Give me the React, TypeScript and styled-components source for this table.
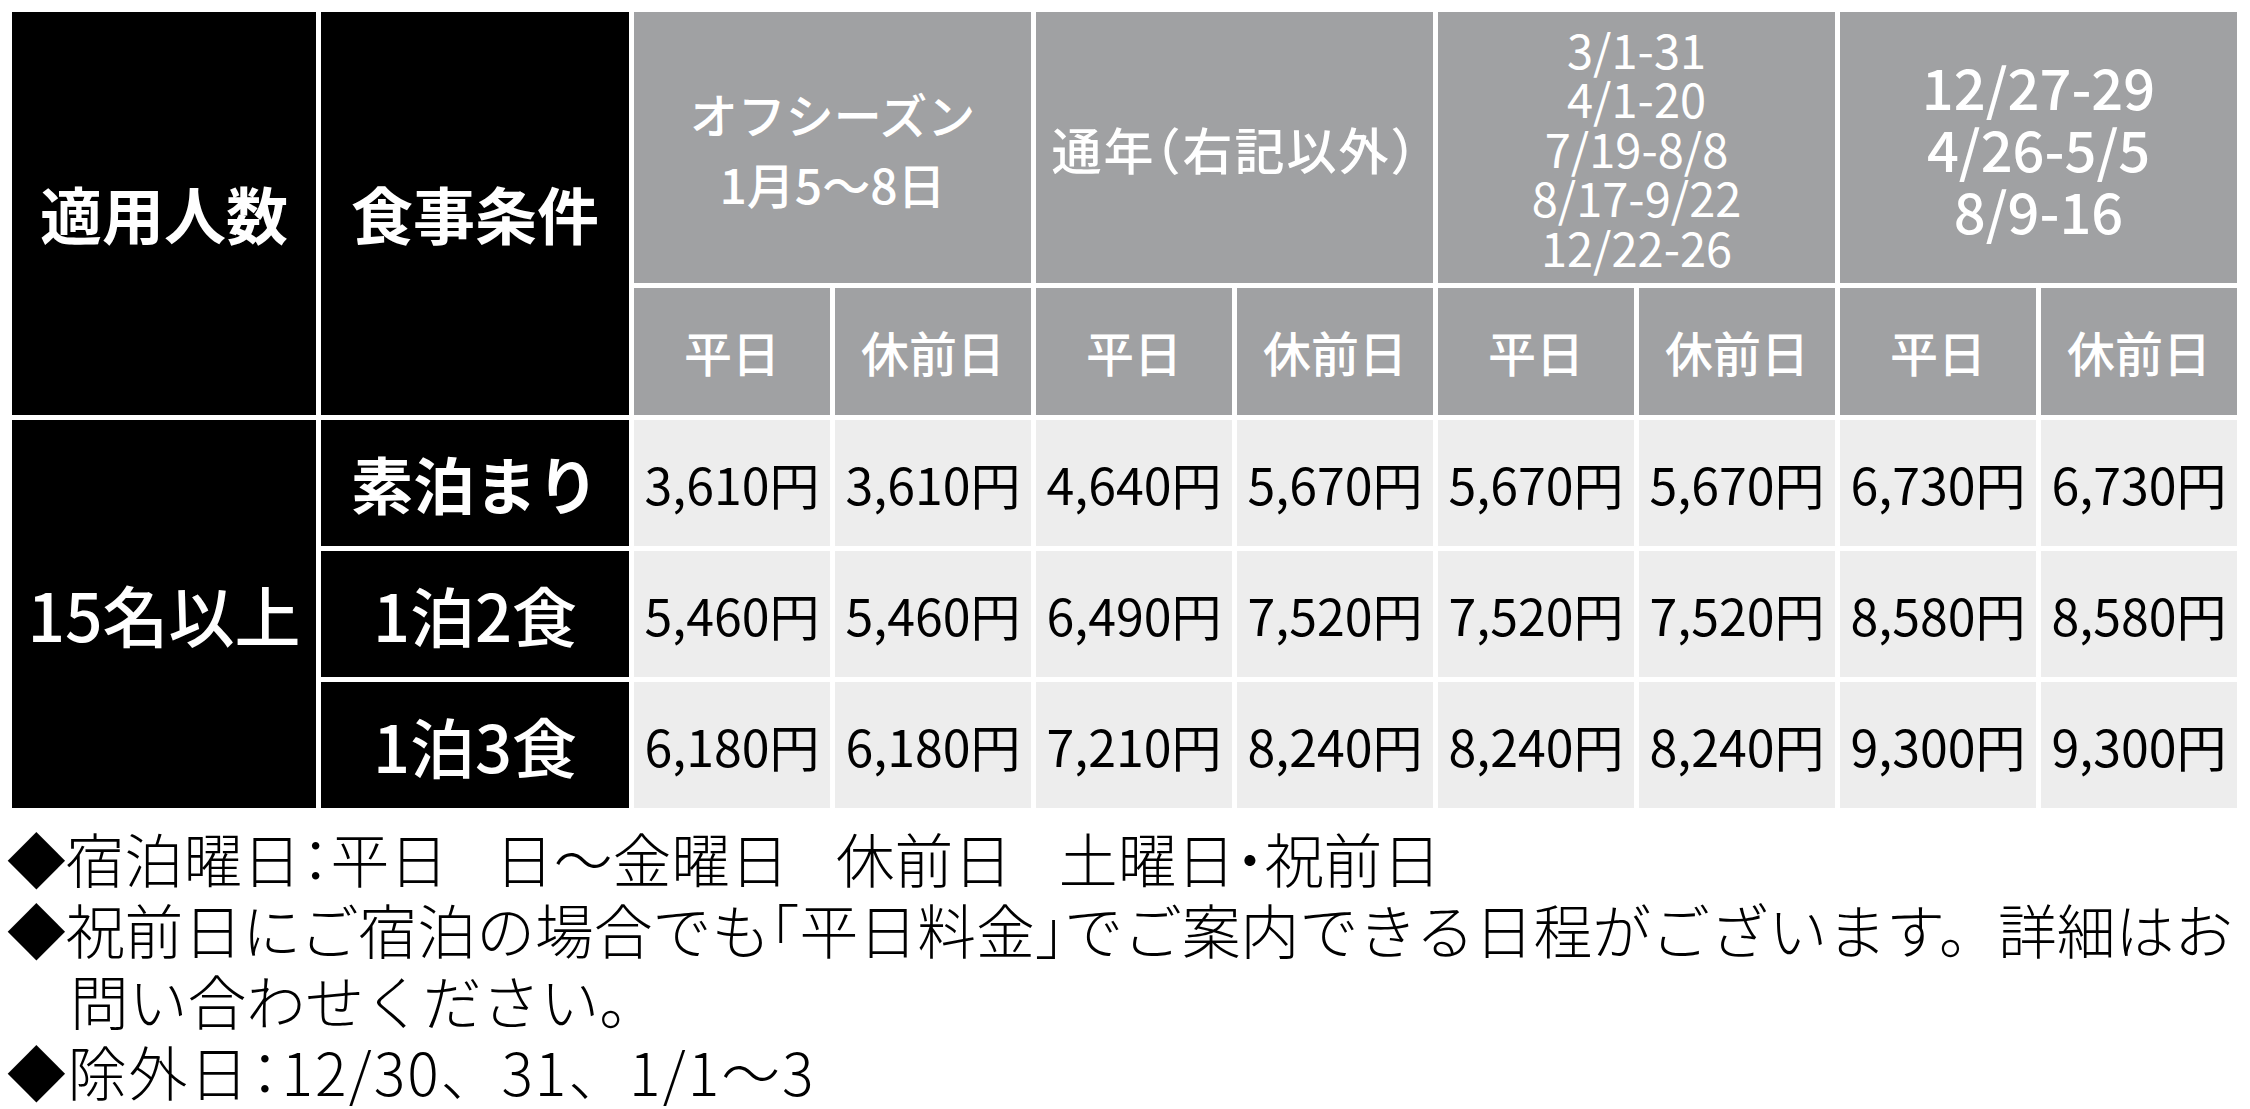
import React from 'react';
import styled, { createGlobalStyle } from 'styled-components';

const GlobalStyle = createGlobalStyle`
  html, body { margin: 0; padding: 0; background: #ffffff; }
  body {
    font-family: "Noto Sans CJK JP", "Noto Sans", sans-serif;
    color: #000000;
  }
`;

const Page = styled.div`
  width: 2250px;
  box-sizing: border-box;
  padding: 7px 0 0 7px;
`;

const Table = styled.table`
  border-collapse: separate;
  border-spacing: 5px;
  table-layout: fixed;
  width: 2235px;
`;

const Row = styled.tr<{ $h: number }>`
  height: ${p => p.$h}px;
`;

type Tone = 'black' | 'gray' | 'light';

const Cell = styled.td<{ $tone: Tone; $size: number; $weight?: number; $lh?: number; $ls?: number }>`
  padding: 0;
  text-align: center;
  vertical-align: middle;
  white-space: nowrap;
  background: ${p => (p.$tone === 'black' ? '#000000' : p.$tone === 'gray' ? '#a0a1a3' : '#ededed')};
  color: ${p => (p.$tone === 'light' ? '#000000' : '#ffffff')};
  font-size: ${p => p.$size}px;
  font-weight: ${p => p.$weight ?? 400};
  line-height: ${p => (p.$lh ? `${p.$lh}px` : '1.2')};
  letter-spacing: ${p => p.$ls ?? 0}px;
`;

const Notes = styled.div`
  margin-top: 9px;
  font-size: 58.8px;
  line-height: 71px;
  font-weight: 300;
  color: #000000;
`;

const Note = styled.p<{ $ls?: number }>`
  margin: 0;
  padding-left: 63px;
  text-indent: -63px;
  white-space: nowrap;
  letter-spacing: ${p => p.$ls ?? 0}px;
`;

const Half = styled.span`
  font-feature-settings: "halt";
`;

const Narrow = styled.span`
  letter-spacing: -12px;
`;

const seasons: { lines: React.ReactNode[]; size: number; lh: number; weight: number; ls?: number }[] = [
  { lines: ['オフシーズン', '1月5～8日'], size: 48, lh: 70, weight: 500 },
  { lines: [<>通年<Half>（</Half>右記以外<Half>）</Half></>], size: 50, lh: 70, weight: 500, ls: 2 },
  { lines: ['3/1-31', '4/1-20', '7/19-8/8', '8/17-9/22', '12/22-26'], size: 47, lh: 49.5, weight: 400 },
  { lines: ['12/27-29', '4/26-5/5', '8/9-16'], size: 56, lh: 62, weight: 500 },
];

const meals = [
  { name: '素泊まり', size: 62, weight: 700, prices: ['3,610', '3,610', '4,640', '5,670', '5,670', '5,670', '6,730', '6,730'] },
  { name: '1泊2食', size: 65, weight: 500, prices: ['5,460', '5,460', '6,490', '7,520', '7,520', '7,520', '8,580', '8,580'] },
  { name: '1泊3食', size: 65, weight: 500, prices: ['6,180', '6,180', '7,210', '8,240', '8,240', '8,240', '9,300', '9,300'] },
];

export default function App() {
  return (
    <Page>
      <GlobalStyle />
      <Table>
        <colgroup>
          <col style={{ width: 304 }} />
          <col style={{ width: 308 }} />
          {Array.from({ length: 8 }).map((_, i) => (
            <col key={i} style={{ width: 196 }} />
          ))}
        </colgroup>
        <thead>
          <Row $h={271}>
            <Cell as="th" $tone="black" $size={62} $weight={700} rowSpan={2}>適用人数</Cell>
            <Cell as="th" $tone="black" $size={62} $weight={700} rowSpan={2}>食事条件</Cell>
            {seasons.map((s, i) => (
              <Cell as="th" key={i} $tone="gray" $size={s.size} $weight={s.weight} $lh={s.lh} $ls={s.ls} colSpan={2}>
                {s.lines.map((l, j) => (
                  <React.Fragment key={j}>
                    {j > 0 && <br />}
                    {l}
                  </React.Fragment>
                ))}
              </Cell>
            ))}
          </Row>
          <Row $h={127}>
            {seasons.map((_, i) => (
              <React.Fragment key={i}>
                <Cell as="th" $tone="gray" $size={48} $weight={500}>平日</Cell>
                <Cell as="th" $tone="gray" $size={48} $weight={500}>休前日</Cell>
              </React.Fragment>
            ))}
          </Row>
        </thead>
        <tbody>
          {meals.map((m, i) => (
            <Row $h={126} key={m.name}>
              {i === 0 && (
                <Cell $tone="black" $size={66} $weight={500} rowSpan={3}>15名以上</Cell>
              )}
              <Cell $tone="black" $size={m.size} $weight={m.weight}>{m.name}</Cell>
              {m.prices.map((p, j) => (
                <Cell key={j} $tone="light" $size={50}>{p}円</Cell>
              ))}
            </Row>
          ))}
        </tbody>
      </Table>
      <Notes>
        <Note>
          ◆宿泊曜日<Half>：</Half>平日<Narrow>　</Narrow>日～金曜日<Narrow>　</Narrow>休前日<Narrow>　</Narrow>土曜日<Half>・</Half>祝前日
        </Note>
        <Note>
          ◆祝前日にご宿泊の場合でも<Half>「</Half>平日料金<Half>」</Half>でご案内できる日程がございます。詳細はお
          <br />
          問い合わせください。
        </Note>
        <Note $ls={2}>◆除外日<Half>：</Half>12/30、31、1/1～3</Note>
      </Notes>
    </Page>
  );
}
